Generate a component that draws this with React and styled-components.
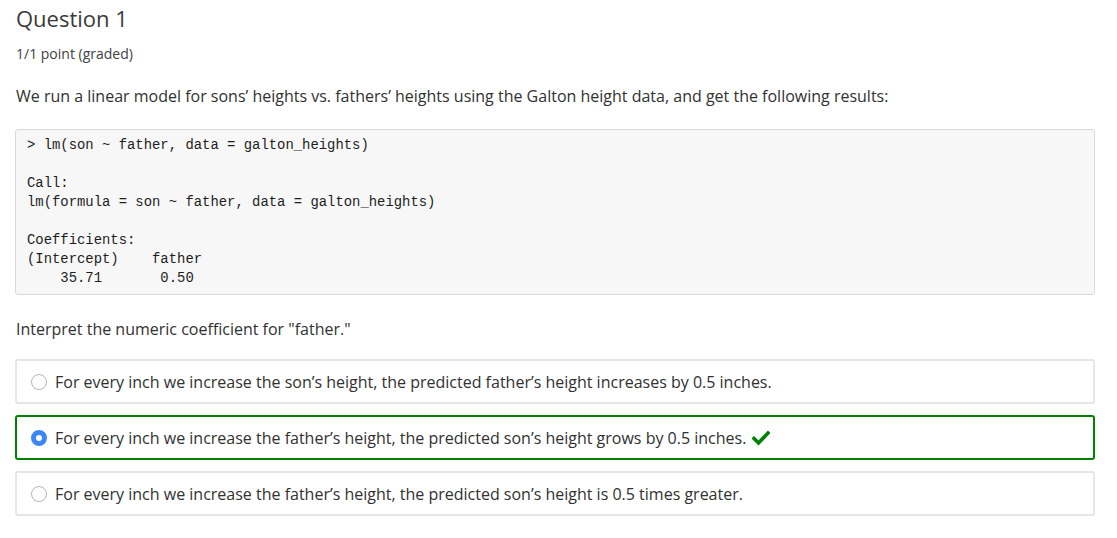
import React from "react";
import styled, { createGlobalStyle } from "styled-components";

const Global = createGlobalStyle`
  html, body { margin: 0; padding: 0; background: #fff; }
  body { font-family: "Open Sans", sans-serif; color: #313131; }
`;

const Page = styled.div`
  padding: 3px 22px 0 15px;
  display: flex;
  flex-direction: column;
`;

const Title = styled.h2`
  margin: 0;
  font-size: 22px;
  font-weight: 400;
  line-height: 30px;
  color: #3a3a3a;
  padding-left: 1px;
`;

const Points = styled.div`
  margin-top: 11px;
  font-size: 14px;
  line-height: 20px;
  color: #414141;
  padding-left: 1px;
`;

const Para = styled.p`
  margin: ${(p) => p.$top}px 0 0;
  font-size: 16px;
  line-height: 24px;
  padding-left: 1px;
`;

const Code = styled.pre`
  margin: 21px 0 0;
  padding: 6px 11px 6px 11px;
  background: #f7f7f7;
  border: 1px solid #d9d9d9;
  border-radius: 3px;
  font-family: "Liberation Mono", monospace;
  font-size: 13.9px;
  line-height: 19px;
  color: #1e1e1e;
`;

const Options = styled.div`
  margin-top: 18px;
  display: flex;
  flex-direction: column;
  gap: 11px;
`;

const Option = styled.label`
  display: flex;
  align-items: center;
  gap: 8px;
  height: 45px;
  box-sizing: border-box;
  padding: 0 14px;
  border: ${(p) => (p.$correct ? "2px solid #008100" : "2px solid #e6e6e6")};
  border-radius: 3px;
  font-size: 16px;
  color: #313131;
`;

const Radio = styled.span`
  width: 16px;
  height: 16px;
  box-sizing: border-box;
  border-radius: 50%;
  flex: none;
  border: ${(p) => (p.$checked ? "5px solid #3d86f6" : "1px solid #b5b5b5")};
  background: #fff;
`;

const Check = styled.svg`
  width: 18px;
  height: 16px;
  margin-left: -2px;
`;

const options = [
  "For every inch we increase the son\u2019s height, the predicted father\u2019s height increases by 0.5 inches.",
  "For every inch we increase the father\u2019s height, the predicted son\u2019s height grows by 0.5 inches.",
  "For every inch we increase the father\u2019s height, the predicted son\u2019s height is 0.5 times greater.",
];

export default function App() {
  return (
    <>
      <Global />
      <Page>
        <Title>Question 1</Title>
        <Points>1/1 point (graded)</Points>
        <Para $top={20}>
          We run a linear model for sons’ heights vs. fathers’ heights using the Galton height data, and get the following results:
        </Para>
        <Code>{`> lm(son ~ father, data = galton_heights)

Call:
lm(formula = son ~ father, data = galton_heights)

Coefficients:
(Intercept)    father  
    35.71       0.50  `}</Code>
        <Para $top={22}>Interpret the numeric coefficient for "father."</Para>
        <Options>
          {options.map((t, i) => (
            <Option key={i} $correct={i === 1}>
              <Radio $checked={i === 1} />
              <span>{t}</span>
              {i === 1 && (
                <Check viewBox="0 0 18 16">
                  <path d="M2 8.5 L6.5 13 L16 3" fill="none" stroke="#008100" strokeWidth="3.6" strokeLinecap="square" strokeLinejoin="miter" />
                </Check>
              )}
            </Option>
          ))}
        </Options>
      </Page>
    </>
  );
}
